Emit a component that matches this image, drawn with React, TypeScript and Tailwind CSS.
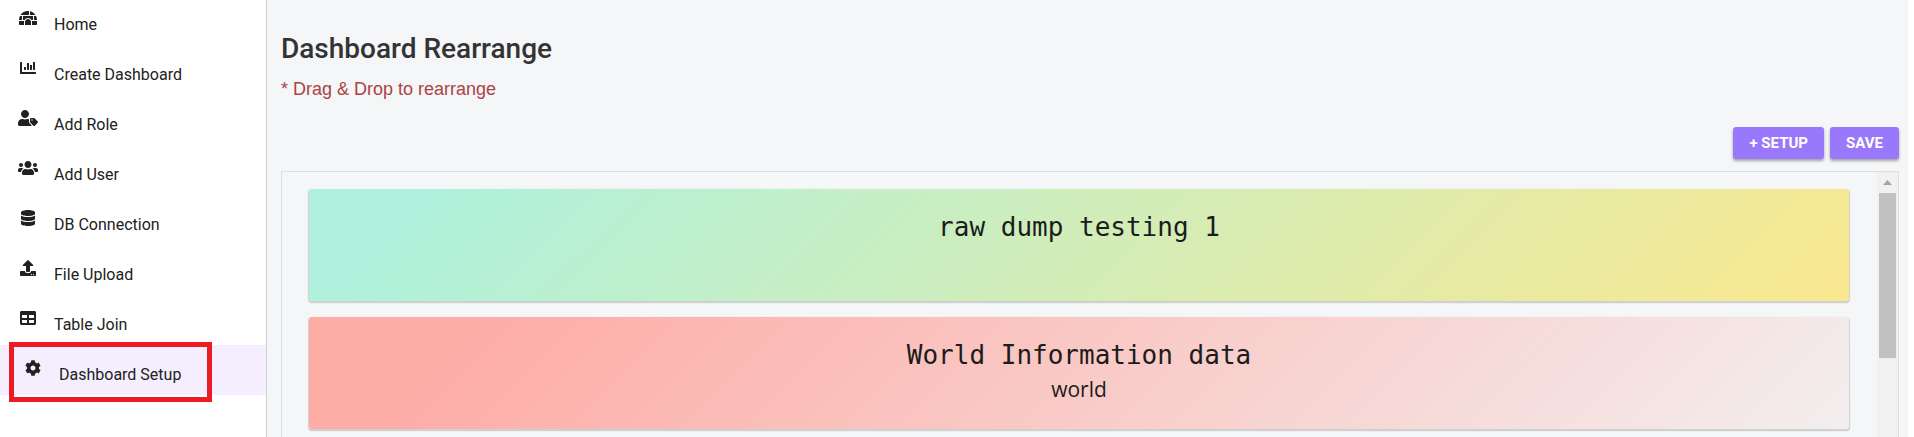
import type { IconType } from "react-icons";
import {
  FaChartBar,
  FaCog,
  FaDatabase,
  FaIgloo,
  FaTable,
  FaUpload,
  FaUsers,
  FaUserTag,
} from "react-icons/fa";

type NavItem = { label: string; icon: IconType; active?: boolean };

const navItems: NavItem[] = [
  { label: "Home", icon: FaIgloo },
  { label: "Create Dashboard", icon: FaChartBar },
  { label: "Add Role", icon: FaUserTag },
  { label: "Add User", icon: FaUsers },
  { label: "DB Connection", icon: FaDatabase },
  { label: "File Upload", icon: FaUpload },
  { label: "Table Join", icon: FaTable },
  { label: "Dashboard Setup", icon: FaCog, active: true },
];

const cards = [
  {
    title: "raw dump testing 1",
    subtitle: "",
    tone: "bg-[linear-gradient(135deg,#aff1dc_8%,#fae88f_100%)]",
  },
  {
    title: "World Information data",
    subtitle: "world",
    tone: "bg-[linear-gradient(135deg,#feaca6_10%,#f3eeee_100%)]",
  },
];

function Sidebar() {
  return (
    <nav className="w-[267px] shrink-0 border-r border-[#cfd0d2] bg-white">
      <ul className="-mt-[5px]">
        {navItems.map(({ label, icon: Icon, active }) => (
          <li key={label} className={active ? "relative bg-[#f5eeff]" : ""}>
            <a
              href="#"
              className={`flex h-[50px] items-start text-[#212121] ${active ? "pl-[23px]" : "pl-[18px]"}`}
            >
              <span className="flex h-[46px] w-5 shrink-0 items-center justify-center">
                <Icon className="h-4 w-5" />
              </span>
              <span className="ml-4 pt-[18px] text-base leading-6">{label}</span>
            </a>
            {active && (
              <span className="pointer-events-none absolute -top-[3px] left-[9px] h-[60px] w-[203px] border-5 border-[#ed1c24]" />
            )}
          </li>
        ))}
      </ul>
    </nav>
  );
}

const buttonClass =
  "h-8 rounded-[3px] bg-[#9a78fb] px-4 text-[15px] font-bold text-white uppercase shadow-[0_2px_3px_rgba(0,0,0,0.35)]";

export default function App() {
  return (
    <div className="flex h-screen overflow-hidden bg-white font-['Roboto',sans-serif]">
      <Sidebar />
      <main className="mr-[6px] flex min-w-0 flex-1 flex-col bg-[#f4f6f8] pr-[9px] pl-[14px]">
        <h1 className="pt-[33px] text-[28px] leading-8 font-medium text-[#333333]">
          Dashboard Rearrange
        </h1>
        <p className="mt-3 font-['Liberation_Sans',sans-serif] text-lg leading-6 text-[#ab4244]">
          * Drag &amp; Drop to rearrange
        </p>
        <div className="mt-[26px] flex justify-end gap-[6px]">
          <button type="button" className={buttonClass}>
            + Setup
          </button>
          <button type="button" className={buttonClass}>
            Save
          </button>
        </div>
        <section className="mt-3 flex min-h-0 flex-1 border border-b-0 border-[#dcdee0]">
          <div className="flex flex-1 flex-col gap-4 pt-[17px] pr-7 pl-[27px]">
            {cards.map((card) => (
              <article
                key={card.title}
                className={`h-28 shrink-0 rounded-[3px] pt-5 text-center text-[#1c1c1c] shadow-[0_1px_1px_1px_#d0d0d0,0_2px_1px_#d0d0d0] ${card.tone}`}
              >
                <h2 className="font-['DejaVu_Sans_Mono',monospace] text-[26px] leading-9">
                  {card.title}
                </h2>
                <p className="font-['Open_Sans',sans-serif] text-[21px] leading-8">
                  {card.subtitle}
                </p>
              </article>
            ))}
          </div>
          <div className="flex w-[21px] flex-col items-center bg-[#f1f1f1]">
            <span className="flex h-[21px] items-center">
              <svg viewBox="0 0 9 5" className="h-[5px] w-[9px]" fill="#a3a3a3">
                <path d="M0 5 4.5 0 9 5z" />
              </svg>
            </span>
            <span className="h-[165px] w-[17px] bg-[#c1c1c1]" />
          </div>
        </section>
      </main>
    </div>
  );
}
